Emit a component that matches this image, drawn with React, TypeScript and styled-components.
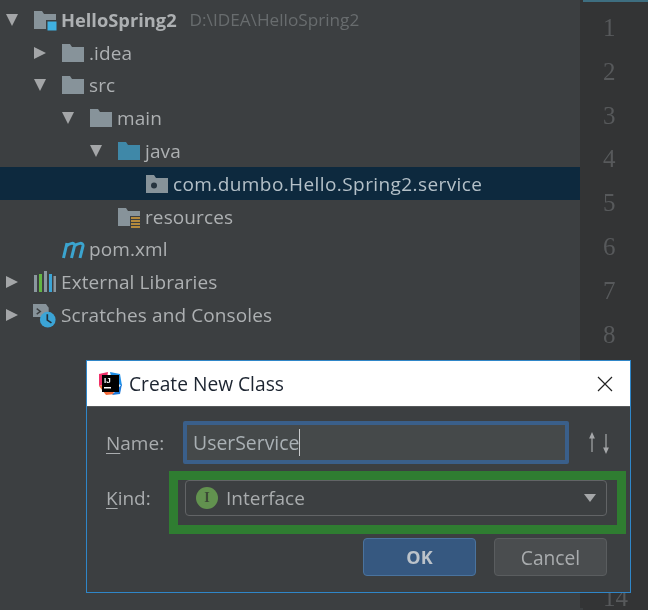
import styled, { createGlobalStyle } from "styled-components";

const GlobalStyle = createGlobalStyle`
  html, body {
    margin: 0;
    padding: 0;
    background: #3c3f41;
  }
  body {
    font-family: "Open Sans", "Noto Sans", sans-serif;
  }
`;

const treeRows = [
  { level: 0, arrow: "down", icon: "project", label: "HelloSpring2", hint: "D:\\IDEA\\HelloSpring2" },
  { level: 1, arrow: "right", icon: "folder", label: ".idea" },
  { level: 1, arrow: "down", icon: "folder", label: "src" },
  { level: 2, arrow: "down", icon: "folder", label: "main" },
  { level: 3, arrow: "down", icon: "source", label: "java" },
  { level: 4, icon: "package", label: "com.dumbo.Hello.Spring2.service", selected: true },
  { level: 3, icon: "resources", label: "resources" },
  { level: 1, icon: "maven", label: "pom.xml" },
  { level: 0, arrow: "right", icon: "libraries", label: "External Libraries" },
  { level: 0, arrow: "right", icon: "scratches", label: "Scratches and Consoles" },
];

const lineNumbers = [1, 2, 3, 4, 5, 6, 7, 8, 9, 10, 11, 12, 13, 14];

const Shell = styled.div`
  position: relative;
  display: flex;
  width: 648px;
  height: 610px;
  overflow: hidden;
  background: #3c3f41;
  filter: blur(0.3px);
`;

const ProjectPanel = styled.div`
  width: 580px;
  padding-top: 3.5px;
  box-sizing: border-box;
`;

const TreeRow = styled.div<{ $level: number; $selected?: boolean }>`
  display: flex;
  align-items: center;
  height: 32.8px;
  padding-left: ${({ $level }) => 3 + $level * 28}px;
  background: ${({ $selected }) => ($selected ? "#0d293e" : "transparent")};
`;

const ArrowSlot = styled.span`
  flex: none;
  display: flex;
  align-items: center;
  justify-content: center;
  width: 18px;
  margin-right: 12px;
`;

const IconSlot = styled.span`
  flex: none;
  display: flex;
  width: 24px;
  height: 24px;
  margin-right: 4px;
`;

const RowLabel = styled.span<{ $bold?: boolean; $selected?: boolean }>`
  font-size: ${({ $bold }) => ($bold ? 18.3 : 19)}px;
  letter-spacing: ${({ $bold, $selected }) => ($bold ? 0 : $selected ? 0.41 : 0.1)}px;
  line-height: 24px;
  white-space: nowrap;
  font-weight: ${({ $bold }) => ($bold ? 700 : 400)};
  color: ${({ $selected }) => ($selected ? "#b4c0c8" : "#adb0b2")};
`;

const RowHint = styled.span`
  margin-left: 13px;
  font-size: 17.2px;
  line-height: 24px;
  white-space: nowrap;
  color: #686c6e;
`;

const Gutter = styled.div`
  position: relative;
  flex: 1;
  padding-top: 4px;
  background: #333435;
  border-top: 2px solid #3e6e80;
  margin-left: 3px;
  box-shadow: -3px -2px 0 #333435;
`;

const LineNumber = styled.div`
  display: flex;
  align-items: center;
  height: 43.85px;
  padding-left: 20px;
  font-family: "Liberation Serif", serif;
  font-size: 25px;
  line-height: 24px;
  color: #57595b;
`;

const Dialog = styled.div`
  position: absolute;
  left: 86px;
  top: 360px;
  width: 545px;
  height: 233px;
  box-sizing: border-box;
  border: 1px solid #2f86c8;
  background: #3c3f41;
  display: flex;
  flex-direction: column;
`;

const TitleBar = styled.div`
  flex: none;
  display: flex;
  align-items: center;
  height: 46px;
  padding: 0 17px 0 11px;
  background: #ffffff;
  border-bottom: 1px solid #55585a;
  box-sizing: border-box;
`;

const TitleText = styled.span`
  flex: 1;
  margin-left: 6px;
  font-size: 19.2px;
  color: #1c2430;
`;

const CloseButton = styled.span`
  display: flex;
  color: #222;
`;

const DialogBody = styled.div`
  flex: 1;
  display: grid;
  grid-template-columns: 77px 386px 1fr;
  grid-template-rows: 43px 36px 44px;
  row-gap: 16px;
  padding: 14px 0 0 19px;
  align-items: center;
`;

const FieldLabel = styled.label`
  font-size: 19px;
  color: #a9acae;
`;

const Mnemonic = styled.span`
  text-decoration: underline;
  text-underline-offset: 3px;
`;

const NameField = styled.div`
  display: flex;
  align-items: center;
  height: 43px;
  box-sizing: border-box;
  padding-left: 6px;
  border: 4px solid #3a5f8a;
  border-radius: 2px;
  background: #45494a;
  font-size: 19.4px;
  color: #a9b0b4;
`;

const Caret = styled.span`
  width: 1px;
  height: 27px;
  background: #c8cacc;
`;

const SortButton = styled.span`
  display: flex;
  padding-left: 18px;
`;

const KindCell = styled.div`
  position: relative;
  grid-column: 2 / 4;
  height: 36px;
`;

const KindCombo = styled.div`
  display: flex;
  align-items: center;
  width: 422px;
  height: 36px;
  margin-left: 2px;
  box-sizing: border-box;
  padding: 0 10px 0 10px;
  border: 1px solid #626466;
  border-radius: 4px;
  background: #3c3f41;
  font-size: 19px;
  color: #a9acae;
`;

const KindBadge = styled.span`
  flex: none;
  display: flex;
  align-items: center;
  justify-content: center;
  width: 22px;
  height: 22px;
  margin-right: 8px;
  border-radius: 50%;
  background: #62924f;
  font-family: "Liberation Serif", serif;
  font-weight: 700;
  font-size: 14px;
  color: #3c4a36;
`;

const KindText = styled.span`
  flex: 1;
`;

const ComboArrow = styled.span`
  width: 0;
  height: 0;
  border-left: 6.5px solid transparent;
  border-right: 6.5px solid transparent;
  border-top: 8px solid #a5a7a9;
`;

const Highlight = styled.div`
  position: absolute;
  left: -14px;
  top: -9px;
  width: 457px;
  height: 63px;
  box-sizing: border-box;
  border: 9px solid #2f7d31;
  pointer-events: none;
`;

const ButtonRow = styled.div`
  grid-column: 1 / 4;
  align-self: end;
  display: flex;
  justify-content: flex-end;
  gap: 18px;
  padding-right: 23px;
`;

const DialogButton = styled.button<{ $primary?: boolean }>`
  width: 113px;
  height: 38px;
  padding: 0;
  border-radius: 4px;
  border: 1px solid ${({ $primary }) => ($primary ? "#4a739e" : "#5a5d5f")};
  background: ${({ $primary }) => ($primary ? "#365880" : "#4a4d4f")};
  color: ${({ $primary }) => ($primary ? "#bcc3ca" : "#a9acae")};
  font-family: inherit;
  font-size: ${({ $primary }) => ($primary ? 18 : 19.2)}px;
  font-weight: ${({ $primary }) => ($primary ? 700 : 400)};
`;

const TreeArrow = ({ dir }: { dir?: string }) => (
  <ArrowSlot>
    {dir && (
      <svg width="14" height="14" viewBox="0 0 14 14">
        <path d={dir === "down" ? "M1 1h12L7 13z" : "M1 1l12 6L1 13z"} fill="#a4a6a8" />
      </svg>
    )}
  </ArrowSlot>
);

const FOLDER = "M1 3h8l2 3h12v15H1z";

const TreeIcon = ({ kind }: { kind: string }) => {
  if (kind === "maven") {
    return (
      <svg width="24" height="24" viewBox="0 0 24 24">
        <path
          d="M2.500 21L6 6M5.500 9c3-3 8.500-4 8 0l-3 12M13.500 9c3-3 9-4 8.500 0l-3 12"
          fill="none"
          stroke="#3ba4cf"
          strokeWidth="3"
        />
      </svg>
    );
  }
  if (kind === "libraries") {
    return (
      <svg width="24" height="24" viewBox="0 0 24 24">
        <rect x="1" y="5" width="3" height="17" fill="#8b979f" />
        <rect x="6" y="4" width="3" height="18" fill="#62b543" />
        <rect x="11" y="1" width="3" height="21" fill="#8b979f" />
        <rect x="16" y="4" width="3" height="18" fill="#3ba4d6" />
        <rect x="20.500" y="6" width="2.500" height="16" fill="#8b979f" />
      </svg>
    );
  }
  if (kind === "scratches") {
    return (
      <svg width="26" height="26" viewBox="0 0 26 26">
        <path d="M0 0h14l3 4v10H0z" fill="#87939a" />
        <path d="M4 5l4 3-4 3" fill="none" stroke="#3c3f41" strokeWidth="1.500" />
        <circle cx="16" cy="17" r="8.500" fill="#3ba4d6" />
        <path d="M15.500 11v6.500l4.500 3" fill="none" stroke="#23303a" strokeWidth="1.800" />
      </svg>
    );
  }
  const color = kind === "source" ? "#3f88a8" : "#87939a";
  return (
    <svg width="24" height="24" viewBox="0 0 24 24">
      <path d={FOLDER} fill={color} />
      {kind === "project" && (
        <>
          <rect x="13" y="12" width="11" height="11" fill="#3c3f41" />
          <rect x="14.500" y="13.500" width="9" height="9" fill="#3fb0e0" />
        </>
      )}
      {kind === "package" && <circle cx="9" cy="13.500" r="3" fill="#26343f" />}
      {kind === "resources" && (
        <>
          <rect x="13" y="11" width="11" height="12" fill="#3c3f41" />
          <path d="M14 13h9M14 16h9M14 19h9M14 22h9" stroke="#b58a3c" strokeWidth="2" />
        </>
      )}
    </svg>
  );
};

const IdeaLogo = () => (
  <svg width="25" height="25" viewBox="0 0 25 25">
    <path d="M1 3l9-2-2 12-7 2z" fill="#f0306a" />
    <path d="M12 1l10 2 2 12-10-6z" fill="#1f8fe8" />
    <path d="M1 15l7 9 9-1-9-10z" fill="#f26b3a" />
    <path d="M24 13l-2 10-8 1z" fill="#1d78d8" />
    <rect x="4" y="4" width="17" height="17" fill="#000" />
    <text x="6" y="12" fontFamily="Liberation Sans, sans-serif" fontWeight="700" fontSize="8" fill="#fff">
      IJ
    </text>
    <rect x="6" y="16" width="7" height="1.500" fill="#fff" />
  </svg>
);

export default function App() {
  return (
    <Shell>
      <GlobalStyle />
      <ProjectPanel>
        {treeRows.map((row) => (
          <TreeRow key={row.label} $level={row.level} $selected={row.selected}>
            <TreeArrow dir={row.arrow} />
            <IconSlot>
              <TreeIcon kind={row.icon} />
            </IconSlot>
            <RowLabel $bold={row.level === 0 && !!row.hint} $selected={row.selected}>
              {row.label}
            </RowLabel>
            {row.hint && <RowHint>{row.hint}</RowHint>}
          </TreeRow>
        ))}
      </ProjectPanel>
      <Gutter>
        {lineNumbers.map((n) => (
          <LineNumber key={n}>{n}</LineNumber>
        ))}
      </Gutter>
      <Dialog>
        <TitleBar>
          <IdeaLogo />
          <TitleText>Create New Class</TitleText>
          <CloseButton>
            <svg width="16" height="16" viewBox="0 0 16 16">
              <path d="M1 1l14 14M15 1L1 15" stroke="currentColor" strokeWidth="1.200" />
            </svg>
          </CloseButton>
        </TitleBar>
        <DialogBody>
          <FieldLabel>
            <Mnemonic>N</Mnemonic>ame:
          </FieldLabel>
          <NameField>
            UserService
            <Caret />
          </NameField>
          <SortButton>
            <svg width="24" height="22" viewBox="0 0 24 22">
              <path d="M5 2v18M3 6l2-4.500L7 6z" stroke="#a5a7a9" strokeWidth="1.200" fill="#a5a7a9" />
              <path d="M19 2v18M17 16l2 4.500 2-4.500z" stroke="#a5a7a9" strokeWidth="1.200" fill="#a5a7a9" />
            </svg>
          </SortButton>
          <FieldLabel>
            <Mnemonic>K</Mnemonic>ind:
          </FieldLabel>
          <KindCell>
            <KindCombo>
              <KindBadge>I</KindBadge>
              <KindText>Interface</KindText>
              <ComboArrow />
            </KindCombo>
            <Highlight />
          </KindCell>
          <ButtonRow>
            <DialogButton $primary>OK</DialogButton>
            <DialogButton>Cancel</DialogButton>
          </ButtonRow>
        </DialogBody>
      </Dialog>
    </Shell>
  );
}
